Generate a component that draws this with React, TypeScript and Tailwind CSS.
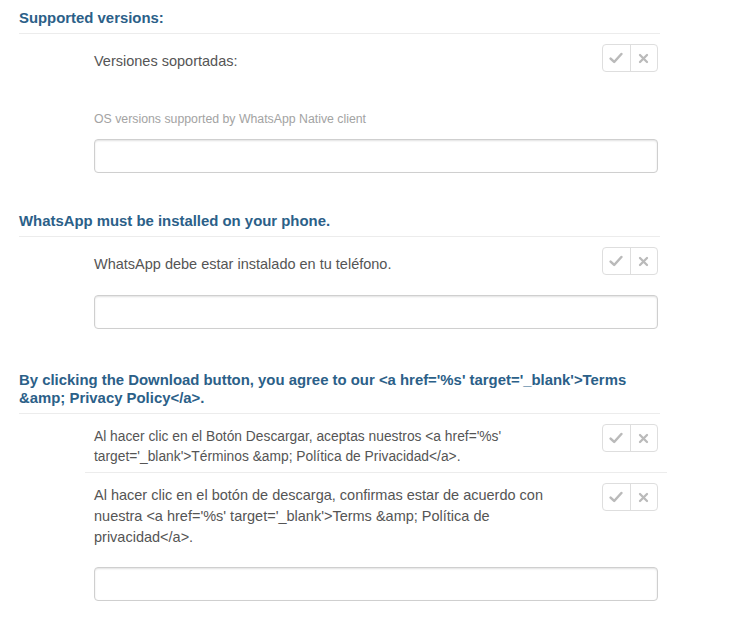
import React from "react";

const Btns = () => (
  <div className="flex h-[28px] w-[56px] shrink-0 rounded-[4px] border border-[#dedede] bg-white">
    <div className="flex flex-1 items-center justify-center border-r border-[#dedede]">
      <svg width="14" height="12" viewBox="0 0 13 11">
        <path d="M1.5 6 L4.8 9.2 L11.5 1.8" stroke="#bababa" strokeWidth="2.3" fill="none" strokeLinecap="round" strokeLinejoin="round" />
      </svg>
    </div>
    <div className="flex flex-1 items-center justify-center">
      <svg width="11" height="11" viewBox="0 0 11 11">
        <path d="M2 2 L9 9 M9 2 L2 9" stroke="#bababa" strokeWidth="2.3" strokeLinecap="round" />
      </svg>
    </div>
  </div>
);

const Input = ({ mt }: { mt: string }) => (
  <div className={`ml-[75px] h-[34px] w-[564px] rounded-[4px] border border-[#cfcfcf] bg-white shadow-[inset_0_1px_2px_rgba(0,0,0,0.12)] ${mt}`} />
);

export default function App() {
  return (
    <div className="min-h-[639px] w-[730px] bg-white pt-[9px] font-['Liberation_Sans',Arial,sans-serif]">
      <div className="ml-[19px] w-[641px]">
        {/* Section 1 */}
        <div className="border-b border-[#ececec] pb-[5px] text-[14.9px] font-bold leading-[19px] text-[#2b6088]">
          Supported versions:
        </div>
        <div className="ml-[66px] flex w-[582px] justify-between pt-[10px] pl-[9px] pr-[9px]">
          <div className="mt-[7px] text-[14.5px] leading-[21px] text-[#555]">Versiones soportadas:</div>
          <Btns />
        </div>
        <div className="ml-[75px] mt-[39px] text-[12.3px] leading-[16px] text-[#a3a3a3]">
          OS versions supported by WhatsApp Native client
        </div>
        <Input mt="mt-[12px]" />

        {/* Section 2 */}
        <div className="mt-[39px] border-b border-[#ececec] pb-[5px] text-[14.9px] font-bold leading-[19px] text-[#2b6088]">
          WhatsApp must be installed on your phone.
        </div>
        <div className="ml-[66px] flex w-[582px] justify-between pt-[10px] pl-[9px] pr-[9px]">
          <div className="mt-[7px] text-[14.5px] leading-[21px] text-[#555]">
            WhatsApp debe estar instalado en tu teléfono.
          </div>
          <Btns />
        </div>
        <Input mt="mt-[20px]" />

        {/* Section 3 */}
        <div className="mt-[42px] border-b border-[#ececec] pb-[6px] text-[14.9px] font-bold leading-[18px] text-[#2b6088]">
          By clicking the Download button, you agree to our &lt;a href='%s' target='_blank'&gt;Terms &amp;amp; Privacy Policy&lt;/a&gt;.
        </div>
        <div className="ml-[66px] flex w-[582px] justify-between border-b border-[#ececec] pt-[10px] pb-[5px] pl-[9px] pr-[9px]">
          <div className="mt-[3px] w-[465px] text-[13.8px] leading-[20px] text-[#555]">
            Al hacer clic en el Botón Descargar, aceptas nuestros &lt;a href='%s' target='_blank'&gt;Términos &amp;amp; Política de Privacidad&lt;/a&gt;.
          </div>
          <Btns />
        </div>
        <div className="ml-[66px] flex w-[582px] justify-between pt-[10px] pl-[9px] pr-[9px]">
          <div className="mt-[2px] w-[465px] text-[14.5px] leading-[21px] text-[#555]">
            Al hacer clic en el botón de descarga, confirmas estar de acuerdo con nuestra &lt;a href='%s' target='_blank'&gt;Terms &amp;amp; Política de privacidad&lt;/a&gt;.
          </div>
          <Btns />
        </div>
        <Input mt="mt-[19px]" />
      </div>
    </div>
  );
}
